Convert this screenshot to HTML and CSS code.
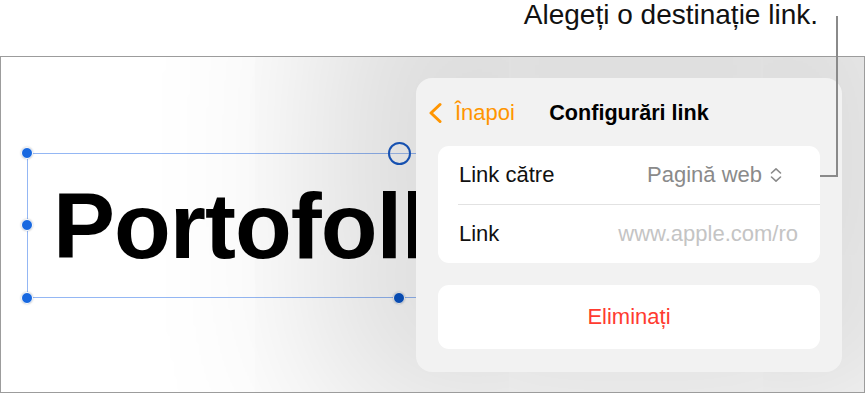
FILE: index.html
```html
<!DOCTYPE html>
<html lang="ro">
<head>
<meta charset="utf-8">
<title>Configurări link</title>
<link rel="stylesheet" href="styles.css">
</head>
<body>
<div class="page">
  <div class="caption"><span class="caption-text">Alegeți o destinație link.</span></div>
  <div class="frame">
    <div class="canvas">
      <div class="word">Portofolk</div>
      <div class="selection"></div>
      <span class="handle h-tl"></span>
      <span class="handle h-ml"></span>
      <span class="handle h-bl"></span>
      <span class="handle h-br"></span>
      <span class="ring"></span>

      <div class="popover">
        <div class="pop-header">
          <div class="back">
            <svg class="chev" width="14" height="22" viewBox="0 0 14 22"><path d="M12 2.5 L3 11 L12 19.5" fill="none" stroke="#ff9500" stroke-width="3" stroke-linecap="round" stroke-linejoin="round"/></svg>
            <span class="back-label">Înapoi</span>
          </div>
          <div class="title">Configurări link</div>
          <div></div>
        </div>
        <div class="group">
          <div class="row row-type">
            <span class="label">Link către</span>
            <span class="value">Pagină web
              <svg class="stepper" width="14" height="16" viewBox="0 0 14 16"><path d="M2.5 6 L7 1.8 L11.5 6 M2.5 10 L7 14.2 L11.5 10" fill="none" stroke="#8a8a8a" stroke-width="1.6" stroke-linecap="round" stroke-linejoin="round"/></svg>
            </span>
          </div>
          <div class="divider"></div>
          <div class="row">
            <span class="label">Link</span>
            <span class="placeholder">www.apple.com/ro</span>
          </div>
        </div>
        <div class="group group-action">
          <span class="delete">Eliminați</span>
        </div>
      </div>
    </div>
  </div>
  <div class="leader"></div>
</div>
</body>
</html>
```

FILE: styles.css
```css
* { box-sizing: border-box; }
html, body { margin: 0; padding: 0; background: #fff; }
body { font-family: "Liberation Sans", Arial, sans-serif; color: #000; }

.page {
  position: relative;
  width: 865px;
  height: 394px;
  overflow: hidden;
}

.caption {
  height: 56px;
  display: flex;
  justify-content: flex-end;
  align-items: flex-start;
  padding-right: 47px;
}
.caption-text {
  font-size: 28px;
  line-height: 32px;
  color: #111;
  margin-top: -1px;
}

.frame {
  width: 865px;
  height: 337px;
  border: 1px solid #9c9c9c;
}
.canvas {
  position: relative;
  width: 100%;
  height: 100%;
  overflow: hidden;
  background: #fff;
}

.word {
  position: absolute;
  left: 52px;
  top: 122px;
  width: 363px;
  overflow: hidden;
  font-size: 93px;
  line-height: 95px;
  font-weight: bold;
  white-space: nowrap;
  letter-spacing: -1px;
}

.selection {
  position: absolute;
  left: 26px;
  top: 96px;
  width: 460px;
  height: 145px;
  border: 1px solid #94b7f4;
}
.handle {
  position: absolute;
  width: 12px;
  height: 12px;
  border-radius: 50%;
  background: #1868e0;
  border: 1.5px solid #fff;
  box-shadow: 0 0 2px rgba(0,0,0,0.25);
}
.h-tl { left: 20px; top: 90px; }
.h-ml { left: 20px; top: 162px; }
.h-bl { left: 20px; top: 235px; }
.h-br { left: 392px; top: 235px; background: #0b55c6; }
.ring {
  position: absolute;
  left: 387px;
  top: 85px;
  width: 23px;
  height: 23px;
  border-radius: 50%;
  border: 2px solid #1a5cc8;
  background: rgba(255,255,255,0.15);
}

.popover {
  position: absolute;
  left: 415px;
  top: 21px;
  width: 426px;
  height: 294px;
  border-radius: 16px;
  background: #f2f2f2;
  box-shadow: 0 -45px 170px 100px rgba(0,0,0,0.14);
  display: flex;
  flex-direction: column;
}

.pop-header {
  height: 68px;
  display: grid;
  grid-template-columns: 1fr auto 1fr;
  align-items: center;
  padding-top: 1px;
}
.back {
  display: flex;
  align-items: center;
  padding-left: 12px;
  gap: 13px;
  color: #ff9500;
  font-size: 22px;
}
.chev { display: block; }
.title {
  font-size: 21.6px;
  font-weight: bold;
  color: #000;
}

.group {
  margin: 0 22px;
  background: #fff;
  border-radius: 11px;
}
.row {
  height: 58px;
  display: flex;
  align-items: center;
  justify-content: space-between;
  padding: 0 22px 0 21px;
  font-size: 22px;
}
.row-type { padding-right: 37px; }
.label { color: #111; }
.value {
  color: #8a8a8a;
  display: flex;
  align-items: center;
  gap: 7px;
}
.stepper { display: block; }
.placeholder { color: #c4c4c4; }
.divider {
  height: 1px;
  margin-left: 20px;
  background: #e2e2e2;
}

.group-action {
  margin-top: 22px;
  height: 64px;
  display: flex;
  align-items: center;
  justify-content: center;
}
.delete {
  color: #ff3b30;
  font-size: 22px;
}

.leader {
  position: absolute;
  left: 820px;
  top: 16px;
  width: 18px;
  height: 161px;
  border-right: 2px solid #8a8a8a;
  border-bottom: 2px solid #8a8a8a;
}
```
